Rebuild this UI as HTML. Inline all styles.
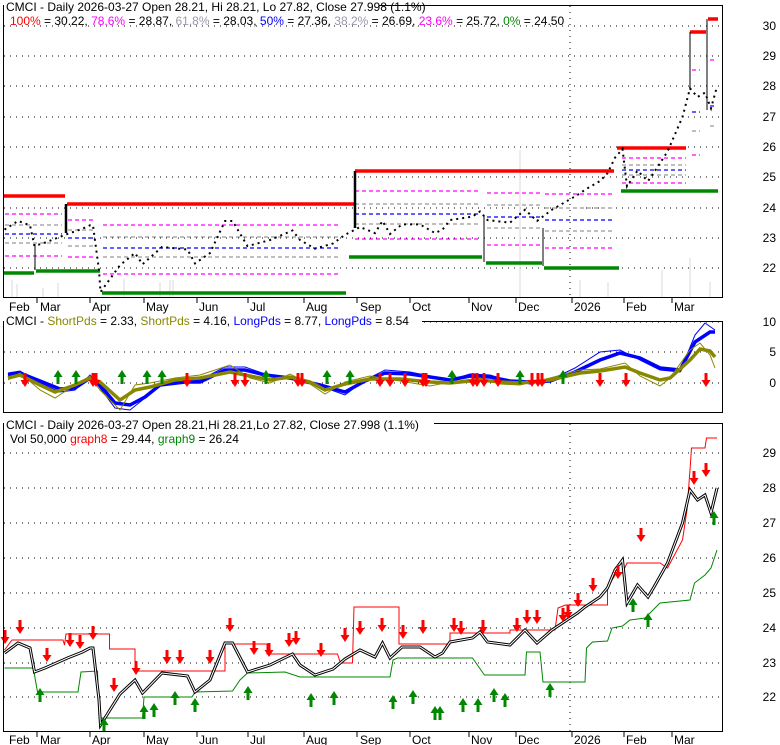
<!DOCTYPE html>
<html><head><meta charset="utf-8"><style>
html,body{margin:0;padding:0;background:#fff;}
svg{display:block;font-family:"Liberation Sans",sans-serif;}
</style></head><body>
<svg width="780" height="745" viewBox="0 0 780 745" xmlns="http://www.w3.org/2000/svg">
<defs>
<g id="dn"><rect x="-1.5" y="-7" width="3" height="8" fill="#f00"/><path d="M-4.5,0 L4.5,0 L0,7 Z" fill="#f00"/></g>
<g id="up"><rect x="-1.5" y="-1" width="3" height="8" fill="#080"/><path d="M-4.5,0 L4.5,0 L0,-7 Z" fill="#080"/></g>
</defs>
<rect width="780" height="745" fill="#fff"/>

<!-- ===== PANEL 1 ===== -->
<g stroke="#000" stroke-width="1" stroke-dasharray="1 5">
<line x1="4" x2="722" y1="26" y2="26"/><line x1="4" x2="722" y1="56" y2="56"/><line x1="4" x2="722" y1="86" y2="86"/><line x1="4" x2="722" y1="117" y2="117"/><line x1="4" x2="722" y1="147" y2="147"/><line x1="4" x2="722" y1="177" y2="177"/><line x1="4" x2="722" y1="208" y2="208"/><line x1="4" x2="722" y1="238" y2="238"/><line x1="4" x2="722" y1="268" y2="268"/>
<line x1="570" x2="570" y1="6" y2="297"/>
</g>
<g stroke="#e6e6e6" stroke-width="1.5">
<line x1="12" x2="12" y1="297" y2="280"/><line x1="17" x2="17" y1="297" y2="284"/><line x1="43" x2="43" y1="297" y2="288"/><line x1="58" x2="58" y1="297" y2="283"/><line x1="124" x2="124" y1="297" y2="279"/><line x1="160" x2="160" y1="297" y2="282"/><line x1="170" x2="170" y1="297" y2="280"/><line x1="173" x2="173" y1="297" y2="280"/><line x1="520" x2="520" y1="297" y2="150"/><line x1="580" x2="580" y1="297" y2="280"/><line x1="608" x2="608" y1="297" y2="282"/><line x1="662" x2="662" y1="297" y2="270"/><line x1="690" x2="690" y1="297" y2="258"/><line x1="710" x2="710" y1="297" y2="282"/>
</g>
<g stroke-width="1.2" stroke-dasharray="4 3" fill="none">
<g stroke="#f0f"><line x1="5" x2="62" y1="214" y2="214"/><line x1="5" x2="62" y1="256" y2="256"/><line x1="68" x2="96" y1="220" y2="220"/><line x1="68" x2="96" y1="257" y2="257"/><line x1="103" x2="341" y1="225" y2="225"/><line x1="103" x2="341" y1="274" y2="274"/><line x1="355" x2="481" y1="191" y2="191"/><line x1="355" x2="481" y1="239" y2="239"/><line x1="487" x2="541" y1="193" y2="193"/><line x1="487" x2="541" y1="245" y2="245"/><line x1="545" x2="613" y1="194" y2="194"/><line x1="545" x2="613" y1="248" y2="248"/><line x1="622" x2="686" y1="158" y2="158"/><line x1="622" x2="686" y1="183" y2="183"/><line x1="692" x2="700" y1="70" y2="70"/><line x1="692" x2="700" y1="155" y2="155"/><line x1="710" x2="716" y1="60" y2="60"/></g>
<g stroke="#999"><line x1="5" x2="62" y1="225" y2="225"/><line x1="5" x2="62" y1="243" y2="243"/><line x1="68" x2="96" y1="230" y2="230"/><line x1="68" x2="96" y1="246" y2="246"/><line x1="103" x2="341" y1="237" y2="237"/><line x1="103" x2="341" y1="257" y2="257"/><line x1="355" x2="481" y1="204" y2="204"/><line x1="355" x2="481" y1="224" y2="224"/><line x1="487" x2="541" y1="205" y2="205"/><line x1="487" x2="541" y1="228" y2="228"/><line x1="545" x2="613" y1="208" y2="208"/><line x1="545" x2="613" y1="231" y2="231"/><line x1="622" x2="686" y1="165" y2="165"/><line x1="622" x2="686" y1="175" y2="175"/><line x1="692" x2="700" y1="131" y2="131"/><line x1="710" x2="716" y1="126" y2="126"/></g>
<g stroke="#00f"><line x1="5" x2="62" y1="234" y2="234"/><line x1="68" x2="96" y1="238" y2="238"/><line x1="103" x2="341" y1="248" y2="248"/><line x1="355" x2="481" y1="214" y2="214"/><line x1="487" x2="541" y1="217" y2="217"/><line x1="545" x2="613" y1="220" y2="220"/><line x1="622" x2="686" y1="170" y2="170"/><line x1="692" x2="700" y1="112" y2="112"/><line x1="710" x2="716" y1="106" y2="106"/></g>
</g>
<g stroke-width="3.5">
<g stroke="#f00"><line x1="4" x2="65" y1="196" y2="196"/><line x1="67" x2="355" y1="204" y2="204"/><line x1="355" x2="614" y1="171" y2="171"/><line x1="617" x2="686" y1="148" y2="148"/><line x1="690" x2="706" y1="32" y2="32"/><line x1="708" x2="718" y1="19" y2="19"/></g>
<g stroke="#080"><line x1="4" x2="34" y1="273" y2="273"/><line x1="36" x2="100" y1="271" y2="271"/><line x1="102" x2="346" y1="293" y2="293"/><line x1="349" x2="482" y1="257" y2="257"/><line x1="486" x2="542" y1="263" y2="263"/><line x1="544" x2="619" y1="268" y2="268"/><line x1="621" x2="718" y1="191" y2="191"/></g>
</g>
<g stroke="#000" stroke-width="2.5"><line x1="66" x2="66" y1="204" y2="233"/><line x1="355" x2="355" y1="171" y2="228"/></g>
<g stroke="#000" stroke-width="1"><line x1="35" x2="35" y1="244" y2="270"/><line x1="484" x2="484" y1="216" y2="262"/><line x1="543" x2="543" y1="228" y2="266"/><line x1="690" x2="690" y1="32" y2="90"/><line x1="707" x2="707" y1="19" y2="110"/></g>
<polyline fill="none" stroke="#000" stroke-width="2" stroke-dasharray="2 4" vector-effect="non-scaling-stroke" transform="matrix(1.5,0,0,0.8668,0,-336.4)" points="3,653 12,643 20,648 23,672 30,668 45,658 55,652 60,648 62,648 66,700 67,725 80,694 90,680 95,693 108,673 125,676 130,692 140,680 150,643 155,643 165,672 180,665 195,654 200,665 210,675 222,669 230,659 240,650 250,657 255,643 260,658 268,647 280,647 290,657 295,653 300,642 315,638 320,632 325,642 340,645 350,630 358,643 368,630 378,620 385,613 390,607 400,597 405,588 410,570 415,560 418,603 425,585 432,597 436,587 445,563 455,523 460,490 465,500 470,495 474,513 478,488"/>
<rect x="3.5" y="5.5" width="719" height="292" fill="none" stroke="#000"/>
<rect x="4" y="0" width="375" height="12" fill="#fff"/>
<text x="6" y="11" font-size="12">CMCI - Daily 2026-03-27 Open 28.21, Hi 28.21, Lo 27.82, Close 27.998 (1.1%)</text>
<text x="10" y="25" font-size="12"><tspan fill="#f00">100%</tspan> = 30.22, <tspan fill="#f0f">78.6%</tspan> = 28.87, <tspan fill="#99a">61.8%</tspan> = 28.03, <tspan fill="#00f">50%</tspan> = 27.36, <tspan fill="#99a">38.2%</tspan> = 26.69, <tspan fill="#f0f">23.6%</tspan> = 25.72, <tspan fill="#080">0%</tspan> = 24.50</text>
<g font-size="12" text-anchor="end"><text x="776" y="30">30</text><text x="776" y="60">29</text><text x="776" y="90">28</text><text x="776" y="121">27</text><text x="776" y="151">26</text><text x="776" y="181">25</text><text x="776" y="212">24</text><text x="776" y="242">23</text><text x="776" y="272">22</text></g>
<g font-size="12"><text x="9" y="311">Feb</text><text x="40" y="311">Mar</text><text x="92" y="311">Apr</text><text x="146" y="311">May</text><text x="199" y="311">Jun</text><text x="250" y="311">Jul</text><text x="306" y="311">Aug</text><text x="360" y="311">Sep</text><text x="412" y="311">Oct</text><text x="471" y="311">Nov</text><text x="518" y="311">Dec</text><text x="574" y="311">2026</text><text x="626" y="311">Feb</text><text x="674" y="311">Mar</text></g>
<g stroke="#000"><line x1="37" x2="37" y1="298" y2="303"/><line x1="90" x2="90" y1="298" y2="303"/><line x1="144" x2="144" y1="298" y2="303"/><line x1="197" x2="197" y1="298" y2="303"/><line x1="248" x2="248" y1="298" y2="303"/><line x1="304" x2="304" y1="298" y2="303"/><line x1="357" x2="357" y1="298" y2="303"/><line x1="410" x2="410" y1="298" y2="303"/><line x1="469" x2="469" y1="298" y2="303"/><line x1="516" x2="516" y1="298" y2="303"/><line x1="572" x2="572" y1="298" y2="303"/><line x1="624" x2="624" y1="298" y2="303"/><line x1="672" x2="672" y1="298" y2="303"/></g>

<!-- ===== PANEL 2 ===== -->
<g stroke="#000" stroke-dasharray="1 5"><line x1="4" x2="722" y1="322" y2="322"/><line x1="4" x2="722" y1="352" y2="352"/><line x1="4" x2="722" y1="383" y2="383"/></g>
<polyline fill="none" stroke="#00f" stroke-width="1" points="8,373 20,371 40,383 60,392 75,390 90,375 100,388 115,408 130,410 145,398 160,384 185,380 200,380 225,367 245,367 265,374 290,378 320,386 345,395 365,380 385,370 410,372 430,376 450,380 470,374 490,375 510,381 530,384 550,380 575,368 600,352 620,350 640,360 660,370 680,372 695,335 705,323 715,330"/>
<polyline fill="none" stroke="#00f" stroke-width="3.5" points="8,375 20,373 40,381 60,389 75,388 90,378 100,385 115,403 130,405 145,397 160,385 185,382 200,382 225,370 245,370 265,375 290,378 320,385 345,392 365,381 385,373 410,374 430,377 450,380 470,376 490,377 510,381 530,382 550,381 575,372 600,360 620,353 640,358 660,368 680,370 695,342 710,332 715,332"/>
<polyline fill="none" stroke="#880" stroke-width="1" points="8,380 20,373 40,390 55,398 75,385 90,376 100,390 120,410 135,385 150,383 175,378 200,375 230,365 250,378 270,383 290,374 310,384 325,394 345,382 370,376 400,381 430,386 450,382 480,378 500,384 520,385 550,378 580,370 600,369 625,363 640,376 660,386 670,378 690,350 700,343 710,355 715,368"/>
<polyline fill="none" stroke="#880" stroke-width="3.5" points="8,378 20,375 40,385 55,392 75,385 90,378 100,382 120,400 135,390 150,387 175,380 200,378 230,372 250,376 270,380 290,377 310,382 325,390 345,384 370,379 400,379 430,382 450,383 480,380 500,382 520,383 550,380 580,373 600,371 625,367 640,373 660,380 670,378 690,360 700,349 710,351 715,357"/>
<g><use href="#dn" x="25" y="380"/><use href="#dn" x="93" y="380"/><use href="#dn" x="96" y="380"/><use href="#dn" x="187" y="380"/><use href="#dn" x="235" y="380"/><use href="#dn" x="245" y="380"/><use href="#dn" x="298" y="380"/><use href="#dn" x="302" y="380"/><use href="#dn" x="380" y="380"/><use href="#dn" x="390" y="380"/><use href="#dn" x="405" y="380"/><use href="#dn" x="423" y="380"/><use href="#dn" x="426" y="380"/><use href="#dn" x="473" y="380"/><use href="#dn" x="477" y="380"/><use href="#dn" x="484" y="380"/><use href="#dn" x="498" y="380"/><use href="#dn" x="532" y="380"/><use href="#dn" x="538" y="380"/><use href="#dn" x="542" y="380"/><use href="#dn" x="600" y="380"/><use href="#dn" x="626" y="380"/><use href="#dn" x="706" y="380"/>
<use href="#up" x="58" y="377"/><use href="#up" x="76" y="377"/><use href="#up" x="122" y="377"/><use href="#up" x="147" y="377"/><use href="#up" x="162" y="377"/><use href="#up" x="266" y="377"/><use href="#up" x="327" y="377"/><use href="#up" x="350" y="377"/><use href="#up" x="452" y="377"/><use href="#up" x="520" y="377"/><use href="#up" x="563" y="377"/></g>
<rect x="3.5" y="321.5" width="719" height="91" fill="none" stroke="#000"/>
<rect x="4" y="314" width="418" height="12" fill="#fff"/>
<text x="6" y="325" font-size="12">CMCI - <tspan fill="#880">ShortPds</tspan> = 2.33, <tspan fill="#880">ShortPds</tspan> = 4.16, <tspan fill="#00f">LongPds</tspan> = 8.77, <tspan fill="#00f">LongPds</tspan> = 8.54</text>
<g font-size="12" text-anchor="end"><text x="776" y="326">10</text><text x="776" y="356">5</text><text x="776" y="387">0</text></g>

<!-- ===== PANEL 3 ===== -->
<g stroke="#000" stroke-dasharray="1 5"><line x1="4" x2="722" y1="453" y2="453"/><line x1="4" x2="722" y1="488" y2="488"/><line x1="4" x2="722" y1="523" y2="523"/><line x1="4" x2="722" y1="558" y2="558"/><line x1="4" x2="722" y1="593" y2="593"/><line x1="4" x2="722" y1="628" y2="628"/><line x1="4" x2="722" y1="663" y2="663"/><line x1="4" x2="722" y1="697" y2="697"/><line x1="570" x2="570" y1="424" y2="731"/></g>
<g fill="none">
<polyline stroke="#f00" stroke-width="1" vector-effect="non-scaling-stroke" transform="scale(1.5,1)" points="3,650 8,640 42,640 43,645 44,634 73,634 73,649 90,649 90,671 150,671 150,644 178,644 178,654 225,654 227,663 235,663 236,607 266,607 266,644 300,644 300,633 340,633 340,630 370,630 372,608 377,605 405,605 405,588 410,575 415,573 418,563 440,563 445,568 455,540 458,510 460,470 461,448 470,448 471,438 478,438"/>
<polyline stroke="#080" stroke-width="1" vector-effect="non-scaling-stroke" transform="scale(1.5,1)" points="3,668 22,668 23,675 25,692 52,692 54,672 65,671 66,718 95,718 96,697 128,697 130,692 155,691 160,680 165,673 190,672 200,677 260,677 262,660 265,658 315,658 322,673 323,675 350,675 351,652 360,652 362,682 390,682 391,648 395,642 405,641 408,628 415,626 420,620 430,618 440,603 460,600 463,583 470,575 474,568 478,550"/>
<polyline stroke="#000" stroke-width="3" vector-effect="non-scaling-stroke" transform="scale(1.5,1)" points="3,653 12,643 20,648 23,672 30,668 45,658 55,652 60,648 62,648 66,700 67,725 80,694 90,680 95,693 108,673 125,676 130,692 140,680 150,643 155,643 165,672 180,665 195,654 200,665 210,675 222,669 230,659 240,650 250,657 255,643 260,658 268,647 280,647 290,657 295,653 300,642 315,638 320,632 325,642 340,645 350,630 358,643 368,630 378,620 385,613 390,607 400,597 405,588 410,570 415,560 418,603 425,585 432,597 436,587 445,563 455,523 460,490 465,500 470,495 474,513 478,488"/>
<polyline stroke="#fff" stroke-width="1" vector-effect="non-scaling-stroke" transform="scale(1.5,1)" points="3,653 12,643 20,648 23,672 30,668 45,658 55,652 60,648 62,648 66,700 67,725 80,694 90,680 95,693 108,673 125,676 130,692 140,680 150,643 155,643 165,672 180,665 195,654 200,665 210,675 222,669 230,659 240,650 250,657 255,643 260,658 268,647 280,647 290,657 295,653 300,642 315,638 320,632 325,642 340,645 350,630 358,643 368,630 378,620 385,613 390,607 400,597 405,588 410,570 415,560 418,603 425,585 432,597 436,587 445,563 455,523 460,490 465,500 470,495 474,513 478,488"/>
</g>
<g>
<use href="#dn" x="5" y="637"/><use href="#dn" x="20" y="627"/><use href="#dn" x="47" y="655"/><use href="#dn" x="70" y="640"/><use href="#dn" x="80" y="642"/><use href="#dn" x="93" y="633"/><use href="#dn" x="114" y="685"/><use href="#dn" x="136" y="668"/><use href="#dn" x="167" y="657"/><use href="#dn" x="180" y="657"/><use href="#dn" x="210" y="657"/><use href="#dn" x="230" y="625"/><use href="#dn" x="254" y="648"/><use href="#dn" x="269" y="650"/><use href="#dn" x="289" y="640"/><use href="#dn" x="296" y="638"/><use href="#dn" x="321" y="650"/><use href="#dn" x="345" y="635"/><use href="#dn" x="360" y="628"/><use href="#dn" x="382" y="625"/><use href="#dn" x="403" y="632"/><use href="#dn" x="423" y="627"/><use href="#dn" x="454" y="625"/><use href="#dn" x="461" y="628"/><use href="#dn" x="483" y="627"/><use href="#dn" x="517" y="625"/><use href="#dn" x="527" y="617"/><use href="#dn" x="537" y="617"/><use href="#dn" x="563" y="615"/><use href="#dn" x="568" y="612"/><use href="#dn" x="578" y="600"/><use href="#dn" x="593" y="585"/><use href="#dn" x="618" y="572"/><use href="#dn" x="641" y="535"/><use href="#dn" x="694" y="478"/><use href="#dn" x="706" y="470"/>
<use href="#up" x="40" y="695"/><use href="#up" x="104" y="725"/><use href="#up" x="144" y="712"/><use href="#up" x="154" y="710"/><use href="#up" x="175" y="698"/><use href="#up" x="195" y="705"/><use href="#up" x="248" y="693"/><use href="#up" x="311" y="700"/><use href="#up" x="334" y="698"/><use href="#up" x="393" y="702"/><use href="#up" x="413" y="697"/><use href="#up" x="435" y="713"/><use href="#up" x="440" y="713"/><use href="#up" x="463" y="705"/><use href="#up" x="478" y="705"/><use href="#up" x="494" y="695"/><use href="#up" x="505" y="700"/><use href="#up" x="550" y="690"/><use href="#up" x="633" y="605"/><use href="#up" x="648" y="620"/><use href="#up" x="714" y="518"/>
</g>
<rect x="3.5" y="423.5" width="719" height="308" fill="none" stroke="#000"/>
<rect x="4" y="416" width="430" height="12" fill="#fff"/>
<text x="6" y="429" font-size="12">CMCI - Daily 2026-03-27 Open 28.21,Hi 28.21,Lo 27.82, Close 27.998 (1.1%)</text>
<text x="10" y="443" font-size="12">Vol 50,000 <tspan fill="#f00">graph8</tspan> = 29.44, <tspan fill="#080">graph9</tspan> = 26.24</text>
<g font-size="12" text-anchor="end"><text x="776" y="457">29</text><text x="776" y="492">28</text><text x="776" y="527">27</text><text x="776" y="562">26</text><text x="776" y="597">25</text><text x="776" y="632">24</text><text x="776" y="667">23</text><text x="776" y="701">22</text></g>
<g font-size="12"><text x="9" y="744">Feb</text><text x="40" y="744">Mar</text><text x="92" y="744">Apr</text><text x="146" y="744">May</text><text x="199" y="744">Jun</text><text x="250" y="744">Jul</text><text x="306" y="744">Aug</text><text x="360" y="744">Sep</text><text x="412" y="744">Oct</text><text x="471" y="744">Nov</text><text x="518" y="744">Dec</text><text x="574" y="744">2026</text><text x="626" y="744">Feb</text><text x="674" y="744">Mar</text></g>
<g stroke="#000"><line x1="37" x2="37" y1="732" y2="737"/><line x1="90" x2="90" y1="732" y2="737"/><line x1="144" x2="144" y1="732" y2="737"/><line x1="197" x2="197" y1="732" y2="737"/><line x1="248" x2="248" y1="732" y2="737"/><line x1="304" x2="304" y1="732" y2="737"/><line x1="357" x2="357" y1="732" y2="737"/><line x1="410" x2="410" y1="732" y2="737"/><line x1="469" x2="469" y1="732" y2="737"/><line x1="516" x2="516" y1="732" y2="737"/><line x1="572" x2="572" y1="732" y2="737"/><line x1="624" x2="624" y1="732" y2="737"/><line x1="672" x2="672" y1="732" y2="737"/></g>
</svg>
</body></html>
